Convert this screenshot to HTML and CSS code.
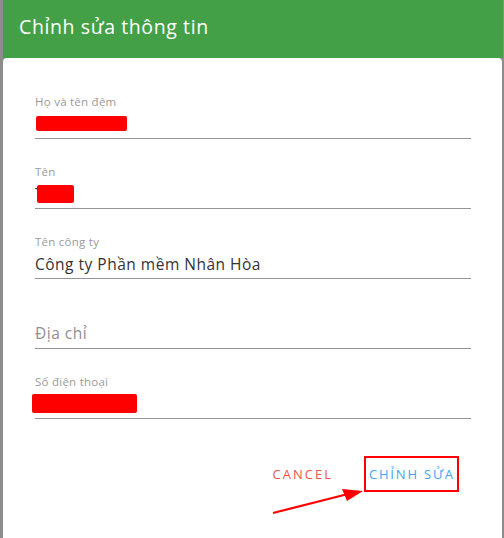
FILE: index.html
```html
<!DOCTYPE html>
<html lang="vi">
<head>
<meta charset="utf-8">
<link rel="stylesheet" href="styles.css">
</head>
<body>
<div class="screen">
  <header class="topbar">
    <h1 class="title">Chỉnh sửa thông tin</h1>
  </header>
  <div class="dialog">
    <div class="field">
      <div class="label">Họ và tên đệm</div>
      <div class="value"><span class="redact r1"></span></div>
    </div>
    <div class="field">
      <div class="label">Tên</div>
      <div class="value">T<span class="redact r2"></span></div>
    </div>
    <div class="field">
      <div class="label">Tên công ty</div>
      <div class="value">Công ty Phần mềm Nhân Hòa</div>
    </div>
    <div class="field">
      <div class="label">&nbsp;</div>
      <div class="value placeholder">Địa chỉ</div>
    </div>
    <div class="field">
      <div class="label">Số điện thoại</div>
      <div class="value"><span class="redact r3"></span></div>
    </div>
    <div class="actions">
      <button class="btn cancel">CANCEL</button>
      <button class="btn submit">CHỈNH SỬA</button>
    </div>
    <svg class="arrow" width="504" height="538" viewBox="0 0 504 538">
      <line x1="273" y1="513" x2="348" y2="494" stroke="#ff0000" stroke-width="2.2"/>
      <polygon points="363,491 342,489 347,501" fill="#ff0000"/>
    </svg>
  </div>
</div>
</body>
</html>
```
FILE: styles.css
```css
html, body {
  margin: 0;
  padding: 0;
}
body {
  background: #8c8c8c;
  font-family: "Open Sans", "Liberation Sans", sans-serif;
  width: 504px;
  height: 538px;
  overflow: hidden;
}
.screen {
  position: relative;
  margin-left: 3px;
  margin-right: 1px;
  height: 538px;
  display: flex;
  flex-direction: column;
}
.topbar {
  background: #43a047;
  height: 58px;
  flex: none;
  display: flex;
  align-items: center;
  padding-left: 16px;
}
.title {
  margin: 0;
  color: #ffffff;
  font-weight: 400;
  font-size: 19.5px;
  letter-spacing: 0.6px;
  padding-bottom: 6px;
}
.dialog {
  background: #ffffff;
  flex: 1;
  margin-right: 1px;
  border-radius: 4px 4px 0 0;
  padding: 11px 31px 0 32px;
}
.field {
  height: 70px;
  box-sizing: border-box;
  padding-top: 25px;
  border-bottom: 1px solid #949494;
}
.label {
  font-size: 11.5px;
  line-height: 16px;
  letter-spacing: 0.25px;
  color: #9a9a9a;
}
.value {
  margin-top: 3px;
  font-size: 15.5px;
  line-height: 22px;
  letter-spacing: 0.5px;
  color: #333333;
  height: 22px;
  display: flex;
  align-items: center;
}
.placeholder {
  color: #8f8f8f;
  margin-top: 2px;
}
.redact {
  display: inline-block;
  background: #ff0000;
  border-radius: 2px;
}
.r1 { width: 91px; height: 15px; margin-left: 1px; margin-top: -1px; }
.r2 { width: 37px; height: 18px; margin-left: -7px; }
.r3 { width: 105px; height: 19px; margin-left: -3px; margin-top: -1px; }
.actions {
  display: flex;
  justify-content: flex-end;
  align-items: center;
  gap: 27px;
  margin-top: 37px;
  margin-right: 12px;
}
.btn {
  background: none;
  border: none;
  font-family: inherit;
  font-size: 13px;
  letter-spacing: 2px;
  padding: 0 4px;
  height: 36px;
  cursor: pointer;
}
.cancel {
  color: #ef5350;
}
.submit {
  color: #42a5f5;
  border: 2px solid #ff0000;
  width: 95px;
  padding: 0 0 0 3px;
  letter-spacing: 1.8px;
  box-sizing: border-box;
  text-align: left;
  white-space: nowrap;
}
.arrow {
  position: absolute;
  left: -3px;
  top: 0;
  pointer-events: none;
}
```
